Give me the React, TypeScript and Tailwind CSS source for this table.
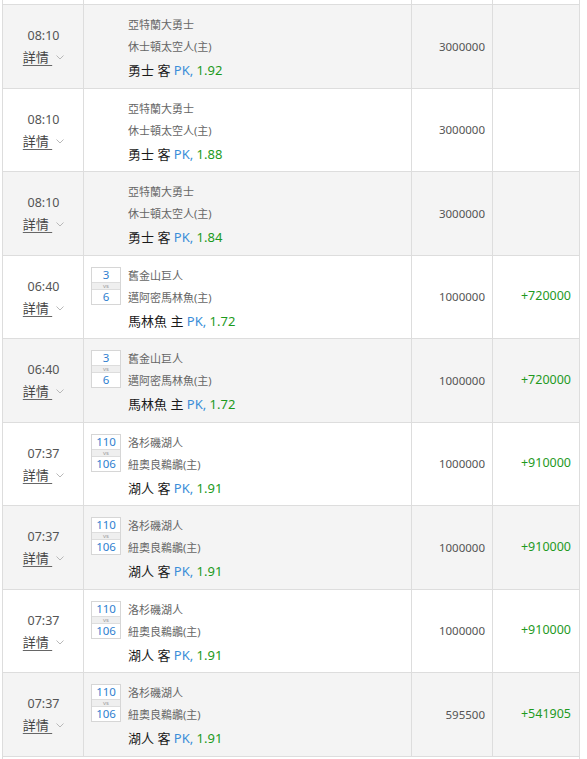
import React from "react";

type Row = {
  time: string;
  score?: [string, string];
  home: string;
  away: string;
  team: string;
  side: string;
  odds: string;
  stake: string;
  profit: string;
};

const rows: Row[] = [
  { time: "08:10", away: "亞特蘭大勇士", home: "休士頓太空人(主)", team: "勇士", side: "客", odds: "1.92", stake: "3000000", profit: "" },
  { time: "08:10", away: "亞特蘭大勇士", home: "休士頓太空人(主)", team: "勇士", side: "客", odds: "1.88", stake: "3000000", profit: "" },
  { time: "08:10", away: "亞特蘭大勇士", home: "休士頓太空人(主)", team: "勇士", side: "客", odds: "1.84", stake: "3000000", profit: "" },
  { time: "06:40", score: ["3", "6"], away: "舊金山巨人", home: "邁阿密馬林魚(主)", team: "馬林魚", side: "主", odds: "1.72", stake: "1000000", profit: "+720000" },
  { time: "06:40", score: ["3", "6"], away: "舊金山巨人", home: "邁阿密馬林魚(主)", team: "馬林魚", side: "主", odds: "1.72", stake: "1000000", profit: "+720000" },
  { time: "07:37", score: ["110", "106"], away: "洛杉磯湖人", home: "紐奧良鵜鶘(主)", team: "湖人", side: "客", odds: "1.91", stake: "1000000", profit: "+910000" },
  { time: "07:37", score: ["110", "106"], away: "洛杉磯湖人", home: "紐奧良鵜鶘(主)", team: "湖人", side: "客", odds: "1.91", stake: "1000000", profit: "+910000" },
  { time: "07:37", score: ["110", "106"], away: "洛杉磯湖人", home: "紐奧良鵜鶘(主)", team: "湖人", side: "客", odds: "1.91", stake: "1000000", profit: "+910000" },
  { time: "07:37", score: ["110", "106"], away: "洛杉磯湖人", home: "紐奧良鵜鶘(主)", team: "湖人", side: "客", odds: "1.91", stake: "595500", profit: "+541905" },
];

function Chevron() {
  return (
    <svg width="8" height="5" viewBox="0 0 8 5" className="ml-[4px] mt-[1px]">
      <path d="M0.5 0.5 L4 4 L7.5 0.5" fill="none" stroke="#b8b8b8" strokeWidth="1" />
    </svg>
  );
}

function ScoreBox({ score }: { score?: [string, string] }) {
  if (!score) return <div className="w-[30px] shrink-0" />;
  return (
    <div className="w-[30px] shrink-0 mt-[2px] h-[38px] border border-[#d6d6d6] flex flex-col bg-white">
      <div className="h-[14px] flex items-center justify-center text-[11.5px] leading-none text-[#2f80d0]">{score[0]}</div>
      <div className="h-[8px] border-y border-[#dddddd] bg-[#efefef] flex items-center justify-center text-[6px] leading-none text-[#a0a0a0]">vs</div>
      <div className="h-[14px] flex items-center justify-center text-[11.5px] leading-none text-[#2f80d0]">{score[1]}</div>
    </div>
  );
}

export default function App() {
  return (
    <div
      className="w-[587px] h-[759px] overflow-hidden bg-white"
      style={{ fontFamily: '"Noto Sans", "Noto Sans CJK TC", sans-serif' }}
    >
      <div className="ml-[2px] w-[578px] h-[759px] border-x border-[#dddddd]">
        <div className="flex h-[5px] border-b border-[#dddddd]">
          <div className="w-[81px] border-r border-[#dddddd]" />
          <div className="w-[328px] border-r border-[#dddddd]" />
          <div className="w-[81px] border-r border-[#dddddd]" />
          <div className="flex-1" />
        </div>
        {rows.map((r, i) => (
          <div
            key={i}
            className={`flex h-[83.5px] border-b border-[#dddddd] ${i % 2 === 0 ? "bg-[#f4f4f4]" : "bg-white"}`}
          >
            <div className="w-[81px] shrink-0 border-r border-[#dddddd] flex flex-col items-center justify-center pl-[1px]">
              <div className="text-[12.5px] leading-[22px] text-[#555555] translate-y-[1px]">{r.time}</div>
              <div className="flex items-center leading-[22px]">
                <span className="text-[13px] text-[#444444] underline decoration-[#666666] underline-offset-[3px]">
                  詳情&nbsp;
                </span>
                <Chevron />
              </div>
            </div>
            <div className="w-[328px] shrink-0 border-r border-[#dddddd] flex pt-[9px]">
              <div className="ml-[7px] flex">
                <ScoreBox score={r.score} />
              </div>
              <div className="ml-[7px] flex flex-col">
                <div className="text-[11px] leading-[22px] text-[#666666]">{r.away}</div>
                <div className="text-[11px] leading-[22px] text-[#666666]">{r.home}</div>
                <div className="-mt-[1px] text-[13px] leading-[26px] text-[#1a1a1a]">
                  {r.team} {r.side} <span className="text-[#3a8ed8]">PK,</span>{" "}
                  <span className="text-[#1c9a1c]">{r.odds}</span>
                </div>
              </div>
            </div>
            <div className="w-[81px] shrink-0 border-r border-[#dddddd] flex items-center justify-end pr-[7px] text-[11.5px] text-[#555555]">
              {r.stake}
            </div>
            <div className="flex-1 flex items-center justify-end pr-[8px] text-[12.5px] text-[#1f9a1f]">
              {r.profit}
            </div>
          </div>
        ))}
      </div>
    </div>
  );
}
